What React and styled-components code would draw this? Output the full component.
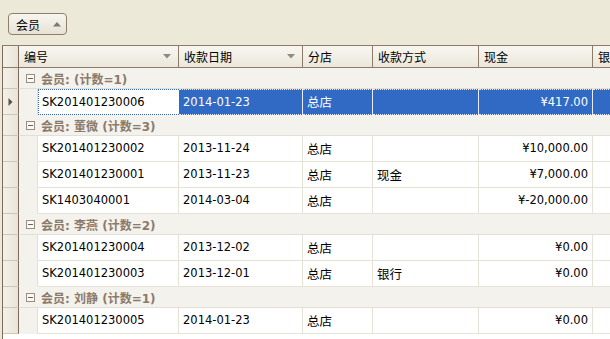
import styled, { createGlobalStyle, css } from 'styled-components'

const GlobalStyle = createGlobalStyle`
  html, body {
    margin: 0;
    padding: 0;
    background: #ece9d8;
    overflow: hidden;
  }
  body {
    font-family: 'DejaVu Sans', 'Noto Sans CJK SC', sans-serif;
    font-size: 11px;
    color: #000;
  }
`

const cols = [
  { title: '编号', width: 160, sort: true },
  { title: '收款日期', width: 124, sort: true },
  { title: '分店', width: 70 },
  { title: '收款方式', width: 106 },
  { title: '现金', width: 114 },
  { title: '银行', width: 90 },
]

const INDENT = 19
const hasCjk = (s) => /[\u4e00-\u9fff]/.test(s)

const groups = [
  {
    label: '会员: (计数=1)',
    rows: [{ no: 'SK201401230006', date: '2014-01-23', shop: '总店', pay: '', cash: '¥417.00', selected: true }],
  },
  {
    label: '会员: 董微 (计数=3)',
    rows: [
      { no: 'SK201401230002', date: '2013-11-24', shop: '总店', pay: '', cash: '¥10,000.00' },
      { no: 'SK201401230001', date: '2013-11-23', shop: '总店', pay: '现金', cash: '¥7,000.00' },
      { no: 'SK1403040001', date: '2014-03-04', shop: '总店', pay: '', cash: '¥-20,000.00' },
    ],
  },
  {
    label: '会员: 李燕 (计数=2)',
    rows: [
      { no: 'SK201401230004', date: '2013-12-02', shop: '总店', pay: '', cash: '¥0.00' },
      { no: 'SK201401230003', date: '2013-12-01', shop: '总店', pay: '银行', cash: '¥0.00' },
    ],
  },
  {
    label: '会员: 刘静 (计数=1)',
    rows: [{ no: 'SK201401230005', date: '2014-01-23', shop: '总店', pay: '', cash: '¥0.00' }],
  },
]

const Page = styled.div`
  width: 610px;
  height: 339px;
  overflow: hidden;
  display: flex;
  flex-direction: column;
`

const GroupPanel = styled.div`
  height: 45px;
  flex-shrink: 0;
  display: flex;
  align-items: flex-start;
  padding: 13px 0 0 8px;
  box-sizing: border-box;
`

const GroupButton = styled.div`
  width: 59px;
  height: 22px;
  box-sizing: border-box;
  border: 1px solid #8f7e6c;
  border-radius: 4px;
  background: linear-gradient(#f7f5ef, #e7e2d5);
  display: flex;
  align-items: center;
  justify-content: space-between;
  padding: 0 5px 0 7px;
  font-size: 12px;
`

const Grid = styled.div`
  margin-left: 2px;
  border-left: 1px solid #7f6b5a;
  border-top: 1px solid #8d7b6a;
  background: #fff;
  flex: 1;
  width: 720px;
`

const Row = styled.div`
  display: flex;
  height: ${({ $h }) => $h}px;
`

const Indicator = styled.div`
  width: 16px;
  flex-shrink: 0;
  box-sizing: border-box;
  border-right: 1px solid #7f6b5a;
  border-bottom: 1px solid ${({ $header }) => ($header ? '#8d7b6a' : '#cfc6b4')};
  background: linear-gradient(90deg, #f3f1ea, #e9e4d7);
  display: flex;
  align-items: center;
  justify-content: center;
`

const HeaderCell = styled.div`
  width: ${({ $w }) => $w}px;
  flex-shrink: 0;
  box-sizing: border-box;
  border-right: 1px solid #8d7b6a;
  border-bottom: 1px solid #8d7b6a;
  background: linear-gradient(#f8f6f0, #ebe7dc);
  display: flex;
  align-items: center;
  justify-content: space-between;
  padding: 0 7px 0 5px;
  font-size: 12px;
`

const GroupRow = styled.div`
  flex: 1;
  background: #f4f2ed;
  border-bottom: 1px solid #e4dfd3;
  display: flex;
  align-items: center;
  padding-left: 7px;
  gap: 6px;
  font-weight: bold;
  color: #8a7a6a;
  font-size: 12px;
`

const Expander = styled.span`
  width: 9px;
  height: 9px;
  box-sizing: border-box;
  border: 1px solid #9a8c7e;
  background: #fbfaf7;
  position: relative;
  &::after {
    content: '';
    position: absolute;
    left: 1px;
    right: 1px;
    top: 3px;
    height: 1px;
    background: #6e6257;
  }
`

const Indent = styled.div`
  width: ${INDENT}px;
  flex-shrink: 0;
  box-sizing: border-box;
  background: #f4f2ed;
  border-right: 1px solid #e4dfd3;
  border-bottom: 1px solid #f4f2ed;
`

const Cell = styled.div`
  width: ${({ $w }) => $w}px;
  flex-shrink: 0;
  box-sizing: border-box;
  border-right: 1px solid #e6e2d6;
  border-bottom: 1px solid #e6e2d6;
  display: flex;
  align-items: center;
  justify-content: ${({ $right }) => ($right ? 'flex-end' : 'flex-start')};
  padding: 0 4px 1px 4px;
  white-space: nowrap;
  font-size: ${({ $cjk }) => ($cjk ? '12.5px' : '11.5px')};
  ${({ $sel }) =>
    $sel &&
    css`
      background: #316ac5;
      color: #fff;
      border-right-color: #e8eef8;
      border-top: 1px dotted #e8eef8;
      border-bottom: 1px dotted #e8eef8;
    `}
  ${({ $focus }) =>
    $focus &&
    css`
      border: 1px dotted #316ac5;
      border-right: none;
      padding-left: 3px;
    `}
`

function SortArrow() {
  return (
    <svg width="8" height="5" viewBox="0 0 8 5">
      <path d="M0 0 H8 L4 4.5 Z" fill="#8e8a82" />
    </svg>
  )
}

function UpArrow() {
  return (
    <svg width="8" height="5" viewBox="0 0 8 5">
      <path d="M0 4.5 H8 L4 0 Z" fill="#7d7870" />
    </svg>
  )
}

function RowPointer() {
  return (
    <svg width="5" height="8" viewBox="0 0 5 8">
      <path d="M0.5 0 L4.5 4 L0.5 8 Z" fill="#5b5048" />
    </svg>
  )
}

function DataRow({ row }) {
  const values = [row.no, row.date, row.shop, row.pay, row.cash, '']
  return (
    <Row $h={26}>
      <Indicator>{row.selected && <RowPointer />}</Indicator>
      <Indent />
      {cols.map((c, i) => (
        <Cell
          key={c.title}
          $w={i === 0 ? c.width - INDENT : c.width}
          $right={i === 4}
          $cjk={hasCjk(values[i])}
          $sel={row.selected && i > 0}
          $focus={row.selected && i === 0}
        >
          {values[i]}
        </Cell>
      ))}
    </Row>
  )
}

export default function App() {
  return (
    <Page>
      <GlobalStyle />
      <GroupPanel>
        <GroupButton>
          <span>会员</span>
          <UpArrow />
        </GroupButton>
      </GroupPanel>
      <Grid>
        <Row $h={22}>
          <Indicator $header />
          {cols.map((c) => (
            <HeaderCell key={c.title} $w={c.width}>
              <span>{c.title}</span>
              {c.sort && <SortArrow />}
            </HeaderCell>
          ))}
        </Row>
        {groups.map((g) => (
          <div key={g.label}>
            <Row $h={21}>
              <Indicator />
              <GroupRow>
                <Expander />
                <span>{g.label}</span>
              </GroupRow>
            </Row>
            {g.rows.map((r) => (
              <DataRow key={r.no} row={r} />
            ))}
          </div>
        ))}
      </Grid>
    </Page>
  )
}
